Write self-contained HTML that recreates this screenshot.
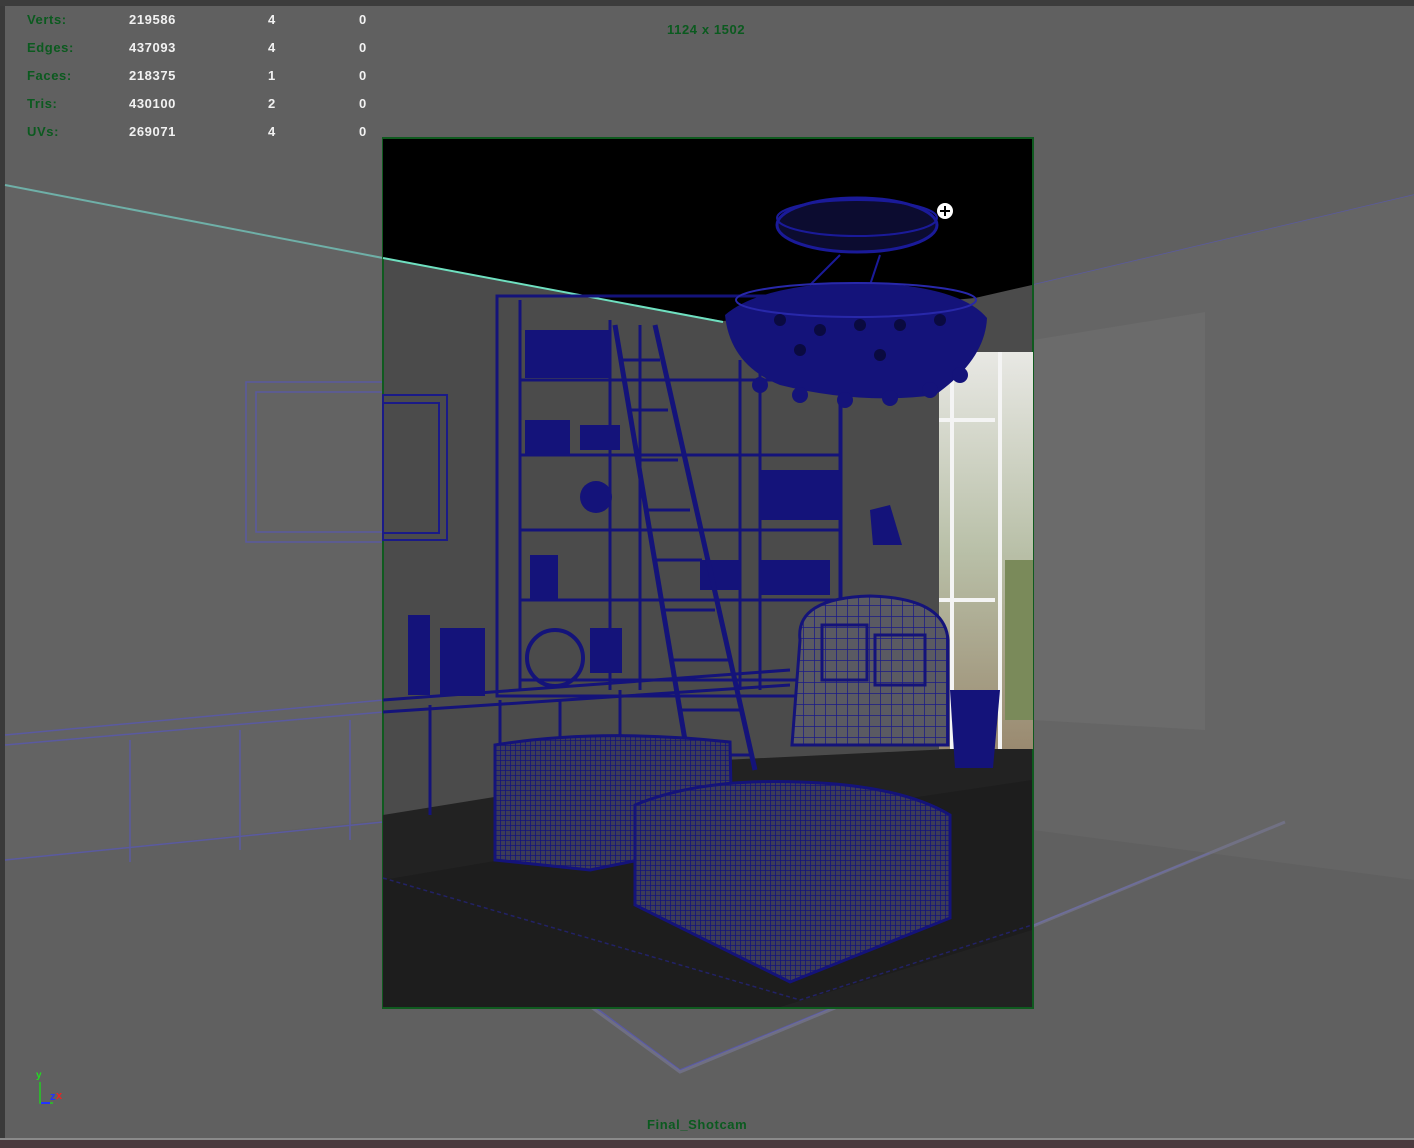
<!DOCTYPE html>
<html><head><style>
html,body{margin:0;padding:0;background:#5f5f5f;width:1414px;height:1148px;overflow:hidden;font-family:"Liberation Sans",sans-serif;}
.hud{position:absolute;font-weight:bold;font-size:13px;letter-spacing:0.6px;}
.g{color:#0b5a1f}.w{color:#f2f2f2}
</style></head><body>
<svg width="1414" height="1148" style="position:absolute;left:0;top:0" xmlns="http://www.w3.org/2000/svg">
<defs>
<pattern id="grid" width="5" height="5" patternUnits="userSpaceOnUse"><rect width="5" height="5" fill="#3c3c58"/><path d="M0 0H5M0 0V5" stroke="#14137a" stroke-width="1.6"/></pattern>
<pattern id="grid2" width="11" height="11" patternUnits="userSpaceOnUse"><rect width="11" height="11" fill="#5a5a62"/><path d="M0 0H11M0 0V11" stroke="#1a1a88" stroke-width="1.5"/></pattern>
<linearGradient id="win" x1="0" y1="0" x2="0" y2="1"><stop offset="0" stop-color="#e8e8e4"/><stop offset="0.5" stop-color="#b9c0a8"/><stop offset="1" stop-color="#9a8a70"/></linearGradient>
</defs>
<rect width="1414" height="1148" fill="#606060"/>
<rect x="0" y="0" width="5" height="1148" fill="#3a3a3a"/>
<rect x="0" y="0" width="1414" height="6" fill="#3c3c3c"/>
<rect x="0" y="1140" width="1414" height="8" fill="#4a3a3e"/>
<rect x="0" y="1138" width="1414" height="2" fill="#8a8a8a"/>
<polygon points="5,185 383,258 383,820 5,860" fill="#636363"/>
<line x1="5" y1="185" x2="383" y2="258" stroke="#6fb0a8" stroke-width="2"/>
<g stroke="#5a5aa0" stroke-width="1.5" fill="none">
<rect x="246" y="382" width="137" height="160"/><rect x="256" y="392" width="127" height="140"/>
<path d="M5 735 L383 700 M5 745 L383 712 M130 740 V862 M240 730 V850 M350 720 V840 M5 860 L383 822"/>
<path d="M1033 285 L1414 195 M1200 260 V820 M1300 240 V840 M1033 720 L1414 745 M1040 830 L1414 850 M1200 440 L1414 410"/>
<path d="M383 850 L680 1070 L1285 822"/>
</g>
<polygon points="1033,285 1414,195 1414,880 1033,830" fill="#656565"/>
<polygon points="1033,340 1205,312 1205,730 1033,720" fill="#6b6b6b"/>
<path d="M390 860 L680 1072 L1285 822" stroke="#7a7a9a" stroke-width="3" fill="none" opacity=".6"/>
<rect x="383" y="138" width="650" height="870" fill="#4b4b4b" stroke="#0f5a1f" stroke-width="2"/>
<polygon points="383,139 1032,139 1032,285 975,298 723,321 383,258" fill="#000"/>
<line x1="383" y1="258" x2="723" y2="322" stroke="#6fe0c0" stroke-width="2"/>
<polygon points="383,815 723,760 1032,745 1032,1007 383,1007" fill="#222"/>
<polygon points="383,880 560,850 1032,780 1032,930 780,1007 383,1007" fill="#1d1d1d"/>
<rect x="939" y="352" width="94" height="397" fill="url(#win)"/>
<g stroke="#f4f4f4" stroke-width="4" fill="none"><path d="M952 352V749M1000 352V749M939 420H995M939 600H995"/></g>
<rect x="1005" y="560" width="28" height="160" fill="#7a8a5a"/>
<g stroke="#1a1a88" stroke-width="2" fill="none"><rect x="383" y="395" width="64" height="145"/><rect x="383" y="403" width="56" height="130"/></g>
<g stroke="#14137a" stroke-width="3" fill="none">
<rect x="497" y="296" width="344" height="400"/>
<path d="M520 300V690M610 320V690M640 325V690M740 360V690M760 360V690M840 400V690"/>
<path d="M520 380H840M520 455H840M520 530H840M520 600H840M520 680H840"/>
<path d="M383 700 L790 670 M383 712 L790 685 M430 705V815M500 700V800M560 700V790M620 690V785"/>
</g>
<g fill="#14137a">
<rect x="525" y="330" width="85" height="48"/><rect x="525" y="420" width="45" height="35"/><rect x="580" y="425" width="40" height="25"/>
<rect x="760" y="470" width="80" height="50"/><rect x="760" y="560" width="70" height="35"/><rect x="700" y="560" width="40" height="30"/>
<rect x="408" y="615" width="22" height="80"/><rect x="440" y="628" width="45" height="68"/><circle cx="555" cy="658" r="28" fill="none" stroke="#14137a" stroke-width="4"/>
<rect x="590" y="628" width="32" height="45"/><rect x="530" y="555" width="28" height="45"/><circle cx="596" cy="497" r="16"/>
<path d="M870 510 L890 505 L902 545 L873 545Z"/>
</g>
<g stroke="#14137a" stroke-width="5" fill="none"><path d="M615 325 L690 770 M655 325 L755 770"/></g>
<g stroke="#14137a" stroke-width="3"><path d="M620 360H660M628 410H668M636 460H678M645 510H690M653 560H702M662 610H715M670 660H728M678 710H740M686 755H750"/></g>
<ellipse cx="857" cy="225" rx="80" ry="27" fill="#0c0c30" stroke="#1a1a99" stroke-width="3"/>
<ellipse cx="857" cy="218" rx="80" ry="18" fill="none" stroke="#1a1a99" stroke-width="2"/>
<path d="M840 255 L810 285 M880 255 L870 285" stroke="#1a1a99" stroke-width="2"/>
<path d="M725 315 Q760 285 857 282 Q960 285 987 318 Q985 360 935 395 Q860 405 780 385 Q730 365 725 315Z" fill="#14137a"/>
<g fill="#14137a"><circle cx="760" cy="385" r="8"/><circle cx="800" cy="395" r="8"/><circle cx="845" cy="400" r="8"/><circle cx="890" cy="398" r="8"/><circle cx="930" cy="390" r="8"/><circle cx="960" cy="375" r="8"/></g>
<ellipse cx="856" cy="300" rx="120" ry="17" fill="none" stroke="#2828aa" stroke-width="2"/>
<g fill="#0a0a40"><circle cx="780" cy="320" r="6"/><circle cx="820" cy="330" r="6"/><circle cx="860" cy="325" r="6"/><circle cx="900" cy="325" r="6"/><circle cx="940" cy="320" r="6"/><circle cx="800" cy="350" r="6"/><circle cx="880" cy="355" r="6"/></g>
<circle cx="945" cy="211" r="8" fill="#fff"/><path d="M940 211H950M945 206V216" stroke="#000" stroke-width="2"/>
<path d="M800 640 Q795 598 870 596 Q945 598 948 640 L948 745 L792 745 Z" fill="url(#grid2)" stroke="#14137a" stroke-width="3"/>
<rect x="822" y="625" width="45" height="55" fill="url(#grid2)" stroke="#14137a" stroke-width="3"/>
<rect x="875" y="635" width="50" height="50" fill="url(#grid2)" stroke="#14137a" stroke-width="3"/>
<path d="M950 690 H1000 L993 768 H955Z" fill="#14137a"/>
<path d="M495 745 Q600 728 730 742 L732 840 Q650 858 590 870 L495 860Z" fill="url(#grid)" stroke="#14137a" stroke-width="3"/>
<path d="M635 805 Q700 778 800 782 Q900 785 950 815 L950 918 L790 982 L635 905Z" fill="url(#grid)" stroke="#14137a" stroke-width="3"/>
<path d="M383 878 L800 1000 L1032 925" stroke="#222266" stroke-width="1.5" fill="none" stroke-dasharray="4 3"/>
<path d="M40 1082V1103H53" stroke="#22cc22" stroke-width="1.5" fill="none"/><path d="M41 1103H50" stroke="#2233ff" stroke-width="2"/>
</svg>
<div class="hud g" style="left:27px;top:12px">Verts:</div><div class="hud w" style="left:129px;top:12px">219586</div><div class="hud w" style="left:268px;top:12px">4</div><div class="hud w" style="left:359px;top:12px">0</div>
<div class="hud g" style="left:27px;top:40px">Edges:</div><div class="hud w" style="left:129px;top:40px">437093</div><div class="hud w" style="left:268px;top:40px">4</div><div class="hud w" style="left:359px;top:40px">0</div>
<div class="hud g" style="left:27px;top:68px">Faces:</div><div class="hud w" style="left:129px;top:68px">218375</div><div class="hud w" style="left:268px;top:68px">1</div><div class="hud w" style="left:359px;top:68px">0</div>
<div class="hud g" style="left:27px;top:96px">Tris:</div><div class="hud w" style="left:129px;top:96px">430100</div><div class="hud w" style="left:268px;top:96px">2</div><div class="hud w" style="left:359px;top:96px">0</div>
<div class="hud g" style="left:27px;top:124px">UVs:</div><div class="hud w" style="left:129px;top:124px">269071</div><div class="hud w" style="left:268px;top:124px">4</div><div class="hud w" style="left:359px;top:124px">0</div>
<div class="hud g" style="left:667px;top:22px">1124 x 1502</div>
<div class="hud g" style="left:647px;top:1117px">Final_Shotcam</div>
<div class="hud" style="left:36px;top:1070px;color:#22dd22;font-size:10px">y</div>
<div class="hud" style="left:50px;top:1091px;color:#2233ff;font-size:11px">z</div>
<div class="hud" style="left:56px;top:1090px;color:#ee2222;font-size:11px">x</div>
</body></html>
